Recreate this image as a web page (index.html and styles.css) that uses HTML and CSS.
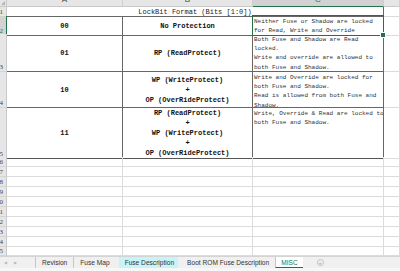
FILE: index.html
```html
<!DOCTYPE html>
<html lang="en">
<head>
    <meta charset="UTF-8">
    <meta name="viewport" content="width=device-width, initial-scale=1.0">
    <title>MISC - LockBit Format</title>
    <link rel="stylesheet" href="styles.css">
</head>
<body>
    <div class="sheet">
        <div class="row row-head">
            <div class="corner"></div>
            <div class="col-head"><span>A</span></div>
            <div class="col-head"><span>B</span></div>
            <div class="col-head col-head-active"><span>C</span></div>
            <div class="col-head"></div>
        </div>

        <div class="row row-1">
            <div class="row-num"><span>1</span></div>
            <div class="cell cell-title">LockBit Format (Bits [1:0])</div>
            <div class="cell"></div>
        </div>

        <div class="row row-2">
            <div class="row-num row-num-active"><span>2</span></div>
            <div class="cell cell-key">00</div>
            <div class="cell cell-key">No Protection</div>
            <div class="cell cell-desc cell-selected">Neither Fuse or Shadow are locked<br>for Read, Write and Override</div>
            <div class="cell"></div>
        </div>

        <div class="row row-3">
            <div class="row-num"><span>3</span></div>
            <div class="cell cell-key">01</div>
            <div class="cell cell-key">RP (ReadProtect)</div>
            <div class="cell cell-desc">Both Fuse and Shadow are Read<br>locked.<br>Write and override are allowed to<br>both Fuse and Shadow.</div>
            <div class="cell"></div>
        </div>

        <div class="row row-4">
            <div class="row-num"><span>4</span></div>
            <div class="cell cell-key">10</div>
            <div class="cell cell-key">WP (WriteProtect)<br>+<br>OP (OverRideProtect)</div>
            <div class="cell cell-desc">Write and Override are locked for<br>both Fuse and Shadow.<br>Read is allowed from both Fuse and<br>Shadow.</div>
            <div class="cell"></div>
        </div>

        <div class="row row-5">
            <div class="row-num"><span>5</span></div>
            <div class="cell cell-key">11</div>
            <div class="cell cell-key">RP (ReadProtect)<br>+<br>WP (WriteProtect)<br>+<br>OP (OverRideProtect)</div>
            <div class="cell cell-desc">Write, Override &amp; Read are locked to<br>both Fuse and Shadow.</div>
            <div class="cell"></div>
        </div>

        <div class="row row-empty"><div class="row-num"><span>6</span></div><div class="cell"></div><div class="cell"></div><div class="cell"></div><div class="cell"></div></div>
        <div class="row row-empty"><div class="row-num"><span>7</span></div><div class="cell"></div><div class="cell"></div><div class="cell"></div><div class="cell"></div></div>
        <div class="row row-empty"><div class="row-num"><span>8</span></div><div class="cell"></div><div class="cell"></div><div class="cell"></div><div class="cell"></div></div>
        <div class="row row-empty"><div class="row-num"><span>9</span></div><div class="cell"></div><div class="cell"></div><div class="cell"></div><div class="cell"></div></div>
        <div class="row row-empty"><div class="row-num"><span>10</span></div><div class="cell"></div><div class="cell"></div><div class="cell"></div><div class="cell"></div></div>
        <div class="row row-empty"><div class="row-num"><span>11</span></div><div class="cell"></div><div class="cell"></div><div class="cell"></div><div class="cell"></div></div>
        <div class="row row-empty"><div class="row-num"><span>12</span></div><div class="cell"></div><div class="cell"></div><div class="cell"></div><div class="cell"></div></div>
        <div class="row row-empty"><div class="row-num"><span>13</span></div><div class="cell"></div><div class="cell"></div><div class="cell"></div><div class="cell"></div></div>
        <div class="row row-empty"><div class="row-num"><span>14</span></div><div class="cell"></div><div class="cell"></div><div class="cell"></div><div class="cell"></div></div>
        <div class="row row-empty row-last"><div class="row-num"><span>15</span></div><div class="cell"></div><div class="cell"></div><div class="cell"></div><div class="cell"></div></div>
    </div>

    <div class="tabbar">
        <div class="tab-nav">
            <span>&#9664;</span>
            <span>&#9654;</span>
        </div>
        <div class="tab">Revision</div>
        <div class="tab">Fuse Map</div>
        <div class="tab tab-cyan">Fuse Description</div>
        <div class="tab tab-wide">Boot ROM Fuse Description</div>
        <div class="tab tab-active">MISC</div>
        <div class="tab-add">+</div>
    </div>
    <div class="statusbar"></div>
</body>
</html>
```

FILE: styles.css
```css
* {
    box-sizing: border-box;
}

body {
    margin: 0;
    width: 400px;
    height: 271px;
    overflow: hidden;
    background-color: #ffffff;
    font-family: 'Liberation Mono', 'DejaVu Sans Mono', monospace;
    color: #222;
}

.row {
    display: grid;
    grid-template-columns: 7px 116px 130px 131px 1fr;
}

.row-head { height: 7px; }
.row-1 { height: 9px; }
.row-2 { height: 18px; }
.row-3 { height: 38px; }
.row-4 { height: 36px; }
.row-5 { height: 49px; }
.row-empty { height: 10px; }
.row-last { height: 9px; }

/* headers */
.corner {
    position: relative;
    background-color: #e6e6e6;
    border-right: 1px solid #c9c9c9;
    border-bottom: 1px solid #c9c9c9;
}

.corner::after {
    content: '';
    position: absolute;
    right: 1px;
    bottom: 1px;
    border-left: 4px solid transparent;
    border-bottom: 4px solid #b4b4b4;
}

.col-head {
    display: flex;
    justify-content: center;
    align-items: flex-end;
    overflow: hidden;
    background-color: #e6e6e6;
    border-right: 1px solid #cfcfcf;
    border-bottom: 1px solid #c9c9c9;
    font-family: 'Liberation Sans', Arial, sans-serif;
    font-size: 8px;
    color: #444;
}

.col-head span {
    line-height: 12px;
    flex-shrink: 0;
}

.col-head-active {
    background-color: #d2d2d2;
    border-bottom: 1px solid #217346;
    color: #217346;
}

.row-num {
    display: flex;
    justify-content: flex-end;
    align-items: flex-end;
    overflow: hidden;
    padding-right: 3px;
    background-color: #e6e6e6;
    border-right: 1px solid #c9c9c9;
    border-bottom: 1px solid #d4d4d4;
    font-family: 'Liberation Serif', serif;
    font-size: 7px;
    color: #444;
}

.row-num span {
    flex-shrink: 0;
    line-height: 8px;
}

.row-num-active {
    background-color: #d2d2d2;
    border-right: 1px solid #217346;
    color: #217346;
}

/* cells */
.cell {
    border-right: 1px solid #dcdcdc;
    border-bottom: 1px solid #dcdcdc;
}

.cell-title {
    grid-column: span 3;
    padding-top: 1px;
    font-size: 7px;
    line-height: 8px;
    text-align: center;
    white-space: nowrap;
    border-right-color: #666;
    border-bottom-color: #666;
}

.cell-key {
    display: flex;
    align-items: center;
    justify-content: center;
    text-align: center;
    font-size: 7px;
    font-weight: bold;
    line-height: 10px;
    white-space: nowrap;
    color: #111;
    border-right-color: #666;
    border-bottom-color: #666;
}

.cell-desc {
    padding: 1px 0 0 1px;
    font-size: 6px;
    line-height: 9.2px;
    color: #333;
    white-space: nowrap;
    overflow: hidden;
    border-right-color: #666;
    border-bottom-color: #666;
}

.row-5 .cell-key,
.row-5 .cell-desc {
    border-bottom: 1px solid #555;
}

.cell-selected {
    position: relative;
    overflow: visible;
}

.cell-selected::before {
    content: '';
    position: absolute;
    top: -1px;
    left: -1px;
    right: -1px;
    bottom: -1px;
    border: 1px solid #217346;
}

.cell-selected::after {
    content: '';
    position: absolute;
    right: -3px;
    bottom: -3px;
    width: 4px;
    height: 4px;
    background-color: #217346;
    border: 1px solid #ffffff;
}

/* sheet tabs */
.tabbar {
    display: flex;
    align-items: stretch;
    height: 12px;
    background-color: #f0f0f0;
    border-top: 1px solid #d4d4d4;
    font-family: 'Liberation Sans', Arial, sans-serif;
    font-size: 6.6px;
    color: #333;
}

.tab-nav {
    display: flex;
    align-items: center;
    gap: 7px;
    width: 35px;
    padding-left: 4px;
    font-size: 4px;
    color: #b8b8b8;
}

.tab {
    display: flex;
    align-items: center;
    padding: 0 6px;
    border-left: 1px solid #c6c6c6;
    white-space: nowrap;
}

.tab-cyan {
    background-color: #c8f3f8;
    border-left: none;
    margin-left: 3px;
    padding: 0 4px 0 6px;
}

.tab-wide {
    padding: 0 6px 0 9px;
    border-left: none;
}

.tab-active {
    background-color: #ffffff;
    color: #217346;
    border-bottom: 1px solid #217346;
    padding: 0 5px;
}

.tab-add {
    display: flex;
    align-items: center;
    justify-content: center;
    width: 7px;
    height: 7px;
    margin: 2px 0 0 14px;
    border: 1px solid #c0c0c0;
    border-radius: 50%;
    font-size: 6px;
    color: #b0b0b0;
    line-height: 1;
}

.statusbar {
    height: 3px;
    background-color: #f7f7f7;
}
```
